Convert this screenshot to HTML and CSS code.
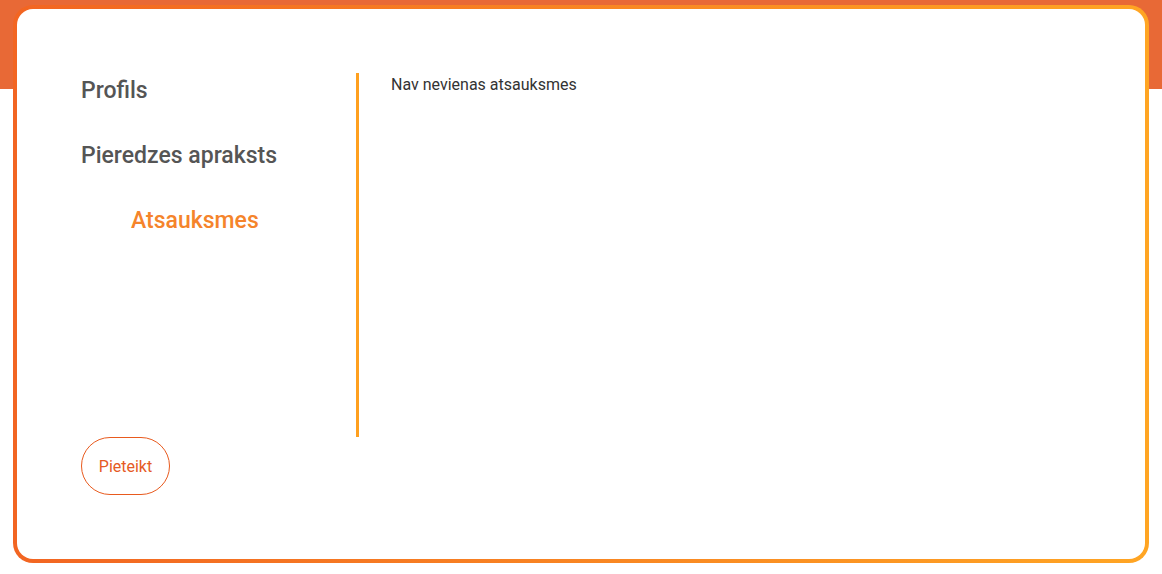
FILE: index.html
```html
<!DOCTYPE html>
<html lang="lv">
<head>
<meta charset="utf-8">
<title>Atsauksmes</title>
<link rel="stylesheet" href="styles.css">
</head>
<body>
<div class="card">
  <div class="card-inner">
    <div class="row">
      <nav class="nav">
        <a class="nav-item">Profils</a>
        <a class="nav-item">Pieredzes apraksts</a>
        <a class="nav-item active">Atsauksmes</a>
      </nav>
      <main class="content">
        <p class="empty">Nav nevienas atsauksmes</p>
      </main>
    </div>
    <button class="apply">Pieteikt</button>
  </div>
</div>
</body>
</html>
```
FILE: styles.css
```css
html, body {
  margin: 0;
  padding: 0;
}
body {
  width: 1162px;
  height: 574px;
  background: linear-gradient(#E86936, #E86936) top left / 100% 89px no-repeat, #ffffff;
  font-family: Roboto, "Noto Sans", sans-serif;
  overflow: hidden;
}
.card {
  margin: 5px 13px 0 13px;
  width: 1136px;
  height: 558px;
  box-sizing: border-box;
  padding: 4px;
  border-radius: 20px;
  background: linear-gradient(90deg, #F26522 0%, #FFA523 100%);
}
.card-inner {
  height: 100%;
  box-sizing: border-box;
  background: #ffffff;
  border-radius: 16px;
  padding: 64px 0 0 64px;
  display: flex;
  flex-direction: column;
  align-items: flex-start;
}
.row {
  display: flex;
  height: 364px;
  width: 100%;
}
.nav {
  width: 275px;
  flex: none;
  border-right: 3px solid #FFA01F;
  display: flex;
  flex-direction: column;
  gap: 38px;
  padding-top: 4px;
}
.nav-item {
  font-size: 23px;
  font-weight: 500;
  line-height: 27px;
  color: #555555;
  cursor: pointer;
}
.nav-item.active {
  color: #F5842B;
  padding-left: 50px;
}
.content {
  padding-left: 32px;
  padding-top: 2px;
}
.empty {
  margin: 0;
  font-size: 16px;
  line-height: 19px;
  color: #333333;
}
.apply {
  width: 89px;
  height: 58px;
  border: 1px solid #E85A1E;
  border-radius: 29px;
  background: #ffffff;
  color: #E55A25;
  font-family: Roboto, "Noto Sans", sans-serif;
  font-size: 16px;
  padding: 0;
  cursor: pointer;
}
```
